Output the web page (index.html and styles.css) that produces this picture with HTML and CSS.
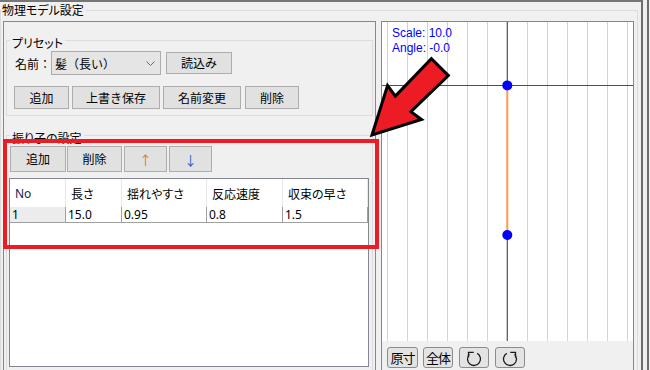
FILE: index.html
```html
<!DOCTYPE html>
<html lang="ja">
<head>
    <meta charset="UTF-8">
    <title>物理モデル設定</title>
    <link rel="stylesheet" href="styles.css">
</head>
<body>
    <div class="screen">
        <div class="window">
            <div class="group outer">
                <div class="group-title">物理モデル設定</div>
                <div class="panels">
                    <div class="panel left-panel">
                        <div class="group preset">
                            <div class="group-title">プリセット</div>
                            <div class="row">
                                <span class="label">名前：</span>
                                <div class="combo">
                                    <span>髪（長い）</span>
                                    <svg class="chevron" width="9" height="5" viewBox="0 0 9 5"><polyline points="0.5,0.5 4.5,4.5 8.5,0.5" fill="none" stroke="#6b6b6b" stroke-width="1"/></svg>
                                </div>
                                <button class="btn load">読込み</button>
                            </div>
                            <div class="row preset-buttons">
                                <button class="btn w-add">追加</button>
                                <button class="btn w-save">上書き保存</button>
                                <button class="btn w-rename">名前変更</button>
                                <button class="btn w-del">削除</button>
                            </div>
                        </div>

                        <div class="group pendulum">
                            <div class="group-title">振り子の設定</div>
                            <div class="row tools">
                                <button class="btn t-add">追加</button>
                                <button class="btn t-del">削除</button>
                                <button class="btn t-arrow up">↑</button>
                                <button class="btn t-arrow down">↓</button>
                            </div>
                            <div class="grid-table">
                                <div class="tr head">
                                    <div>No</div>
                                    <div>長さ</div>
                                    <div>揺れやすさ</div>
                                    <div>反応速度</div>
                                    <div>収束の早さ</div>
                                </div>
                                <div class="tr data">
                                    <div class="rowhead">1</div>
                                    <div>15.0</div>
                                    <div>0.95</div>
                                    <div>0.8</div>
                                    <div>1.5</div>
                                </div>
                            </div>
                        </div>
                    </div>

                    <div class="panel right-panel">
                        <svg class="canvas" width="251" height="319" viewBox="0 0 251 319">
                            <g stroke="#d3d3d3" stroke-width="1">
                                <line x1="5.5" y1="0" x2="5.5" y2="319"/>
                                <line x1="25.5" y1="0" x2="25.5" y2="319"/>
                                <line x1="45.5" y1="0" x2="45.5" y2="319"/>
                                <line x1="65.5" y1="0" x2="65.5" y2="319"/>
                                <line x1="85.5" y1="0" x2="85.5" y2="319"/>
                                <line x1="105.5" y1="0" x2="105.5" y2="319"/>
                                <line x1="145.5" y1="0" x2="145.5" y2="319"/>
                                <line x1="165.5" y1="0" x2="165.5" y2="319"/>
                                <line x1="185.5" y1="0" x2="185.5" y2="319"/>
                                <line x1="205.5" y1="0" x2="205.5" y2="319"/>
                                <line x1="225.5" y1="0" x2="225.5" y2="319"/>
                                <line x1="245.5" y1="0" x2="245.5" y2="319"/>
                            </g>
                            <g stroke="#505050" stroke-width="1.2">
                                <line x1="0" y1="63.5" x2="251" y2="63.5"/>
                                <line x1="125.3" y1="0" x2="125.3" y2="63"/>
                                <line x1="125.3" y1="213" x2="125.3" y2="319"/>
                            </g>
                            <line x1="125.3" y1="63" x2="125.3" y2="213" stroke="#ff9a4c" stroke-width="2"/>
                            <circle cx="125.3" cy="63.4" r="5" fill="#0000ff"/>
                            <circle cx="125.3" cy="213" r="5" fill="#0000ff"/>
                            <text class="canvas-label" x="10" y="15">Scale: 10.0</text>
                            <text class="canvas-label" x="10" y="29.5">Angle: -0.0</text>
                        </svg>
                        <div class="view-tools">
                            <button class="vbtn v-orig">原寸</button>
                            <button class="vbtn v-all">全体</button>
                            <button class="vbtn v-rot">
                                <svg width="18" height="18" viewBox="0 0 18 18"><path d="M12.25 4.37 A6.5 6.5 0 1 1 4.4 5.4" fill="none" stroke="#1a1a1a" stroke-width="1.3"/><polyline points="3.5,8.6 3.5,3.4 8.7,3.4" fill="none" stroke="#1a1a1a" stroke-width="1.3"/></svg>
                            </button>
                            <button class="vbtn v-rot">
                                <svg width="18" height="18" viewBox="0 0 18 18"><g transform="translate(18 0) scale(-1 1)"><path d="M12.25 4.37 A6.5 6.5 0 1 1 4.4 5.4" fill="none" stroke="#1a1a1a" stroke-width="1.3"/><polyline points="3.5,8.6 3.5,3.4 8.7,3.4" fill="none" stroke="#1a1a1a" stroke-width="1.3"/></g></svg>
                            </button>
                        </div>
                    </div>
                </div>
            </div>
        </div>
        <div class="edge"></div>

        <!-- 注釈 -->
        <div class="highlight"></div>
        <svg class="arrow" width="650" height="370" viewBox="0 0 650 370">
            <polygon transform="translate(372 135) rotate(-45)" points="0,0 46,-24 44,-11 96,-12 96,12 44,11 46,24" fill="#ed1c24" stroke="#000" stroke-width="3" stroke-linejoin="miter"/>
        </svg>
    </div>
</body>
</html>
```

FILE: styles.css
```css
* {
    box-sizing: border-box;
}

body {
    margin: 0;
    background-color: #f0f0f0;
    font-family: "Noto Sans", "Noto Sans CJK JP", sans-serif;
    font-size: 12px;
    color: #000;
    overflow: hidden;
}

.screen {
    position: relative;
    display: flex;
    width: 650px;
    height: 370px;
    overflow: hidden;
}

.window {
    flex: none;
    width: 643px;
    height: 370px;
    border-top: 2px solid #767676;
    border-right: 2px solid #6d6d6d;
    overflow: hidden;
}

.edge {
    flex: none;
    width: 2px;
    margin-left: 4px;
    background-color: #6d6d6d;
}

.group {
    border: 1px solid #dcdcdc;
}

.group-title {
    width: fit-content;
    margin-top: -9px;
    padding: 0 2px;
    line-height: 16px;
    background-color: #f0f0f0;
    font-family: "Noto Sans CJK JP", sans-serif;
    font-feature-settings: "palt";
}

.outer {
    height: 380px;
    margin: 8px 3px 0 0;
}

.outer > .group-title {
    padding: 0 2px 0 1px;
}

.panels {
    display: flex;
    gap: 5px;
    padding: 3px 0 0 2px;
}

.panel {
    height: 360px;
    border: 1px solid #828790;
}

.left-panel {
    width: 373px;
}

.right-panel {
    width: 253px;
    display: flex;
    flex-direction: column;
}

/* プリセット */
.preset {
    margin: 18px 2px 0;
    padding: 3px 0 6px 8px;
}

.preset > .group-title {
    margin-left: -5px;
}

.row {
    display: flex;
    align-items: center;
}

.label {
    width: 36px;
    font-family: "Noto Sans CJK JP", sans-serif;
}

.combo {
    display: flex;
    align-items: center;
    justify-content: space-between;
    width: 110px;
    height: 24px;
    padding: 0 5px 0 3px;
    border: 1px solid #acacac;
    background-color: #e5e5e5;
    font-family: "Noto Sans CJK JP", sans-serif;
}

.btn {
    height: 23px;
    padding: 0;
    border: 1px solid #adadad;
    background-color: #e1e1e1;
    color: #000;
    font: inherit;
    font-family: "Noto Sans CJK JP", sans-serif;
    line-height: 1;
}

.load {
    width: 66px;
    height: 22px;
    margin-left: 5px;
}

.preset-buttons {
    gap: 3px;
    margin: 11px 0 0 -1px;
}

.w-add { width: 55px; }
.w-save { width: 88px; }
.w-rename { width: 78px; }
.w-del { width: 54px; margin-left: 1px; }

/* 振り子の設定 */
.pendulum {
    height: 260px;
    margin: 19px 2px 0;
    padding: 3px 0 0 3px;
}

.pendulum > .group-title {
    margin-left: 0;
}

.tools .btn {
    height: 26px;
}

.t-add { width: 56px; }
.t-del { width: 55px; margin-left: 1px; }
.t-arrow { width: 43px; margin-left: 2px; font-size: 13px; }
.up { color: #d87a1c; }
.down { color: #1e5fc0; }

.grid-table {
    width: 360px;
    height: 189px;
    margin: 6px 0 0 -1px;
    border: 1px solid #828790;
    background-color: #fff;
}

.tr {
    display: grid;
    grid-template-columns: 56px 56px 85px 76px 85px;
}

.head > div {
    display: flex;
    align-items: center;
    height: 28px;
    padding-left: 5px;
    border-right: 1px solid #e8e8e8;
    font-family: "Noto Sans CJK JP", sans-serif;
    font-feature-settings: "palt";
}

.head > div:first-child {
    font-family: "Noto Sans", sans-serif;
    color: #1b1b4a;
}

.data > div {
    height: 16px;
    padding-left: 2px;
    line-height: 15px;
    border-right: 1px solid #a0a0a0;
    border-bottom: 1px solid #a0a0a0;
}

.data > .rowhead {
    background-color: #ececec;
}

/* 表示エリア */
.canvas {
    display: block;
    flex: none;
    background-color: #fff;
}

.canvas-label {
    font-family: "Liberation Sans", sans-serif;
    font-size: 12px;
    fill: #0000ff;
}

.view-tools {
    display: flex;
    padding: 6px 0 0 5px;
}

.vbtn {
    display: flex;
    align-items: center;
    justify-content: center;
    width: 30px;
    height: 21px;
    margin-left: 6px;
    padding: 0;
    border: 1px solid #8c8c8c;
    border-radius: 3px;
    background-color: #e3e3e3;
    color: #000;
    font: inherit;
    font-family: "Noto Sans CJK JP", sans-serif;
    font-size: 13px;
    letter-spacing: -1px;
}

.vbtn svg {
    flex: none;
}

.v-orig {
    width: 31px;
    margin-left: 0;
}

.v-all {
    margin-left: 5px;
}

/* 注釈 */
.highlight {
    position: absolute;
    left: 3px;
    top: 139px;
    width: 376px;
    height: 110px;
    border: 4px solid #ed1c24;
}

.arrow {
    position: absolute;
    left: 0;
    top: 0;
    pointer-events: none;
}
```
